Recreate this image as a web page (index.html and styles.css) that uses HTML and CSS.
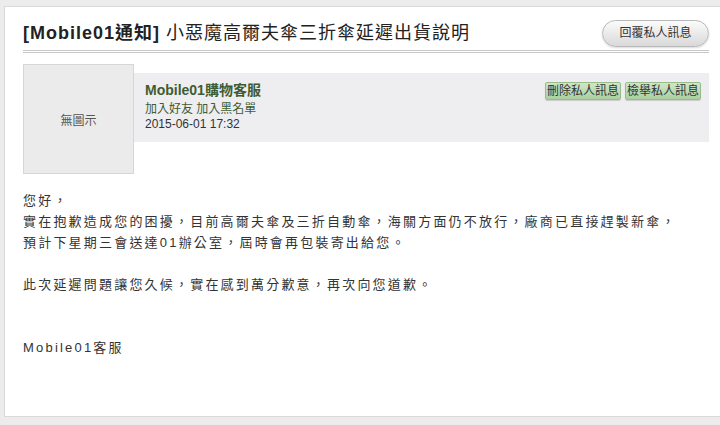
FILE: index.html
```html
<!DOCTYPE html>
<html lang="zh-Hant">
<head>
<meta charset="utf-8">
<title>Mobile01通知</title>
<link rel="stylesheet" href="styles.css">
</head>
<body>
<div class="panel">
  <div class="inner">
    <div class="header">
      <h1 class="title"><b>[Mobile01通知]</b> 小惡魔高爾夫傘三折傘延遲出貨說明</h1>
      <a class="reply-btn">回覆私人訊息</a>
    </div>
    <div class="author">
      <div class="avatar">無圖示</div>
      <div class="info">
        <div class="meta">
          <div class="name">Mobile01購物客服</div>
          <div class="links"><a>加入好友</a> <a>加入黑名單</a></div>
          <div class="date">2015-06-01 17:32</div>
        </div>
        <div class="actions">
          <a class="gbtn">刪除私人訊息</a>
          <a class="gbtn">檢舉私人訊息</a>
        </div>
      </div>
    </div>
    <div class="message">您好，<br>實在抱歉造成您的困擾，目前高爾夫傘及三折自動傘，海關方面仍不放行，廠商已直接趕製新傘，<br>預計下星期三會送達01辦公室，屆時會再包裝寄出給您。<br><br>此次延遲問題讓您久候，實在感到萬分歉意，再次向您道歉。<br><br><br>Mobile01客服</div>
  </div>
</div>
</body>
</html>
```

FILE: styles.css
```css
html, body {
  margin: 0;
  padding: 0;
}
body {
  background: #ececec;
  width: 720px;
  height: 425px;
  overflow: hidden;
  font-family: "Liberation Sans", Arial, "Noto Sans CJK TC", sans-serif;
  color: #333;
}
.panel {
  margin: 6px 0 0 4px;
  width: 740px;
  height: 411px;
  background: #fff;
  border: 1px solid #d9d9d9;
  box-sizing: border-box;
  padding: 13px 0 0 18px;
}
.inner {
  width: 686px;
}
.header {
  display: flex;
  align-items: center;
  justify-content: space-between;
  height: 27px;
  padding-bottom: 3px;
  border-bottom: 3px double #c8c8c8;
}
.title {
  margin: 0;
  font-size: 18px;
  font-weight: normal;
  letter-spacing: 1px;
  color: #222;
  font-family: "Liberation Sans", Arial, "Noto Sans CJK TC", sans-serif;
  line-height: 27px;
}
.title b {
  font-weight: bold;
}
.reply-btn {
  display: block;
  width: 107px;
  height: 27px;
  box-sizing: border-box;
  border: 1px solid #b9b9b9;
  border-radius: 14px;
  background: linear-gradient(#fbfbfb, #d9d9d9);
  box-shadow: 0 1px 2px rgba(0,0,0,0.15);
  font-size: 12px;
  line-height: 25px;
  text-align: center;
  color: #333;
}
.author {
  display: flex;
  margin-top: 11px;
}
.avatar {
  width: 111px;
  height: 110px;
  box-sizing: border-box;
  border: 1px solid #d6d6d6;
  background: #ebebeb;
  font-size: 12px;
  color: #555;
  display: flex;
  align-items: center;
  justify-content: center;
  flex: none;
}
.info {
  flex: 1;
  margin-top: 9px;
  height: 69px;
  background: #eeeef0;
  display: flex;
  justify-content: space-between;
  padding: 0 8px 0 11px;
}
.meta {
  padding-top: 8px;
}
.name {
  font-size: 14px;
  font-weight: bold;
  color: #3d5c33;
  line-height: 18px;
}
.links {
  margin-top: 3px;
  font-size: 12px;
  line-height: 15px;
  color: #3d5c33;
}
.date {
  font-size: 12px;
  line-height: 15px;
  color: #333;
}
.actions {
  display: flex;
  gap: 4px;
  padding-top: 9px;
  align-items: flex-start;
}
.gbtn {
  display: block;
  width: 76px;
  height: 18px;
  box-sizing: border-box;
  border: 1px solid #97bd8c;
  border-radius: 2px;
  background: linear-gradient(#cfe6c8, #a9d09e);
  box-shadow: 0 1px 1px rgba(0,0,0,0.15);
  font-size: 12px;
  line-height: 16px;
  text-align: center;
  color: #333;
}
.message {
  margin-top: 16px;
  font-size: 13px;
  line-height: 21px;
  letter-spacing: 2.2px;
  color: #333;
  white-space: nowrap;
}
```
